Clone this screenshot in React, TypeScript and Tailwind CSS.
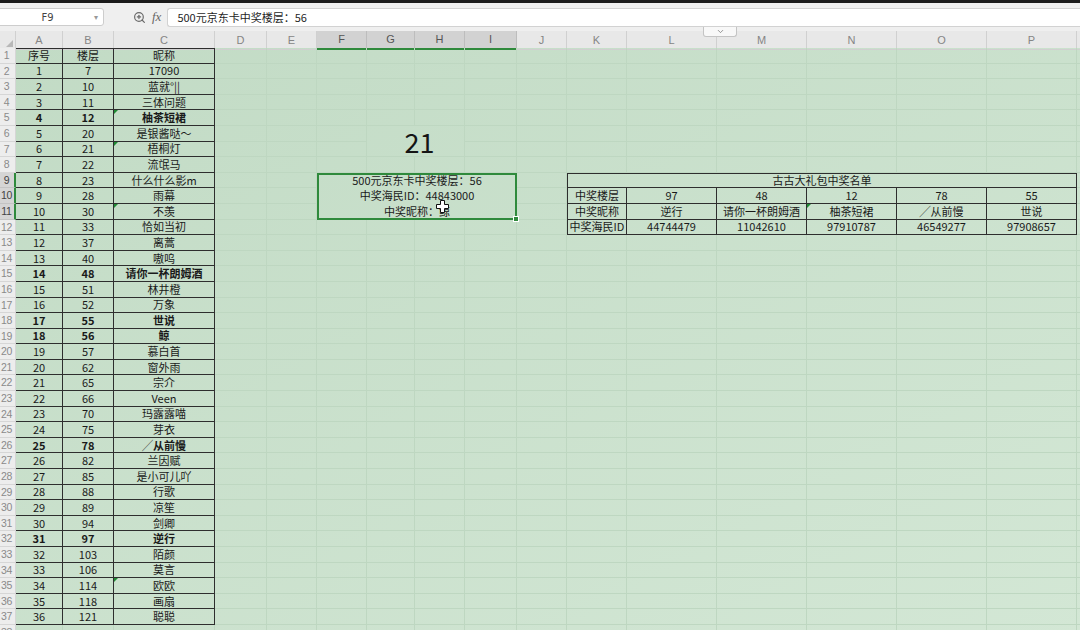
import type { ReactNode } from 'react';
import { ZoomIn, ChevronDown } from 'lucide-react';

const COLS = ['A', 'B', 'C', 'D', 'E', 'F', 'G', 'H', 'I', 'J', 'K', 'L', 'M', 'N', 'O', 'P'];
const SEL_COLS = ['F', 'G', 'H', 'I'];
const SEL_ROWS = [9, 10, 11];
const ROW_COUNT = 38;

// 楼层, 昵称, 是否中奖
const ENTRIES: [number, string, boolean][] = [
  [7, '17090', false],
  [10, '蓝就°||', false],
  [11, '三体问题', false],
  [12, '柚茶短裙', true],
  [20, '是银酱哒～', false],
  [21, '梧桐灯', false],
  [22, '流氓马', false],
  [23, '什么什么影m', false],
  [28, '雨幕', false],
  [30, '不羡', false],
  [33, '恰如当初', false],
  [37, '离蒿', false],
  [40, '嗷呜', false],
  [48, '请你一杯朗姆酒', true],
  [51, '林井橙', false],
  [52, '万象', false],
  [55, '世说', true],
  [56, '鲸', true],
  [57, '慕白首', false],
  [62, '窗外雨', false],
  [65, '宗介', false],
  [66, 'Veen', false],
  [70, '玛露露喵', false],
  [75, '芽衣', false],
  [78, '╱从前慢', true],
  [82, '兰因赋', false],
  [85, '是小可儿吖', false],
  [88, '行歌', false],
  [89, '凉笙', false],
  [94, '剑卿', false],
  [97, '逆行', true],
  [103, '陌颜', false],
  [106, '莫言', false],
  [114, '欧欧', false],
  [118, '画扇', false],
  [121, '聪聪', false],
];

const WINNERS = [
  { floor: '97', nick: '逆行', id: '44744479' },
  { floor: '48', nick: '请你一杯朗姆酒', id: '11042610' },
  { floor: '12', nick: '柚茶短裙', id: '97910787' },
  { floor: '78', nick: '╱从前慢', id: '46549277' },
  { floor: '55', nick: '世说', id: '97908657' },
];

const WIN_LABELS: Record<number, string> = { 10: '中奖楼层', 11: '中奖昵称', 12: '中奖海民ID' };

// cells with the little green error marker
const FLAGGED = new Set(['5C', '7C', '11C', '35C', '11N']);

const plain = 'border-r border-b border-[#bed7c1]';
const boxed = 'flex items-center justify-center border-r border-b border-[#2e2e2e] whitespace-nowrap';

function Flag() {
  return (
    <span className="absolute left-0 top-0 h-0 w-0 border-r-[4px] border-t-[4px] border-r-transparent border-t-[#1f8a34]" />
  );
}

function RowHead({ n }: { n: number }) {
  const sel = SEL_ROWS.includes(n);
  return (
    <div
      className={
        sel
          ? 'relative border-b border-r-2 border-b-[#c4c4c4] border-r-[#2f8a3c] bg-[#d5d5d5] text-[#444]'
          : 'relative border-b border-r border-[#d6d6d6] bg-[#ededed] text-[#8a8a8a]'
      }
    >
      <span className="absolute left-[-2px] top-0 w-[17px] text-center font-['Liberation_Sans',sans-serif] text-[10.5px] leading-[15px] tracking-[-0.3px]">
        {n}
      </span>
    </div>
  );
}

function SelectedBox() {
  return (
    <div className="relative col-span-4 row-span-3 flex flex-col justify-center border-2 border-[#2f8a3c] text-center text-[11px] leading-[15.6px] text-[#1a1a1a]">
      <div>500元京东卡中奖楼层：56</div>
      <div>中奖海民ID：44843000</div>
      <div>中奖昵称：鲸</div>
      {/* fat cross pointer */}
      <svg className="absolute left-[117px] top-[25px]" width="13" height="13" viewBox="0 0 13 13">
        <path d="M4.5 0.5h4v4h4v4h-4v4h-4v-4h-4v-4h4z" fill="#fff" stroke="#111" strokeWidth="1" />
      </svg>
      <span className="absolute -bottom-[4px] -right-[4px] h-[6px] w-[6px] border border-white bg-[#2f8a3c]" />
    </div>
  );
}

function cellAt(r: number, col: string): ReactNode | undefined {
  const key = `${r}${col}`;

  // covered by merged areas
  if (r >= 10 && r <= 11 && SEL_COLS.includes(col)) return undefined;
  if (r === 9 && ['G', 'H', 'I'].includes(col)) return undefined;
  if (r === 9 && ['L', 'M', 'N', 'O', 'P'].includes(col)) return undefined;
  if (r === 6 && col === 'H') return undefined;
  if (r === 7 && (col === 'G' || col === 'H')) return undefined;

  // left table
  if (r <= 37 && (col === 'A' || col === 'B' || col === 'C')) {
    let text: string;
    let bold = false;
    if (r === 1) {
      text = col === 'A' ? '序号' : col === 'B' ? '楼层' : '昵称';
    } else {
      const [floor, nick, win] = ENTRIES[r - 2];
      text = col === 'A' ? String(r - 1) : col === 'B' ? String(floor) : nick;
      bold = win;
    }
    return (
      <div
        key={key}
        className={`relative ${boxed} ${r === 1 ? 'border-t' : ''} ${bold ? 'font-bold' : ''}`}
      >
        {FLAGGED.has(key) && <Flag />}
        {text}
      </div>
    );
  }

  if (r === 6 && col === 'G') {
    return (
      <div
        key={key}
        className="col-span-2 row-span-2 flex items-center justify-center border-b border-r border-[#bed7c1] pl-[8px] text-[27px] leading-none text-[#151515]"
      >
        21
      </div>
    );
  }

  if (r === 9 && col === 'F') return <SelectedBox key={key} />;

  // winners table
  if (r === 9 && col === 'K') {
    return (
      <div key={key} className={`col-span-6 border-l border-t ${boxed}`}>
        古古大礼包中奖名单
      </div>
    );
  }
  if (r >= 10 && r <= 12 && col === 'K') {
    return (
      <div key={key} className={`border-l ${boxed}`}>
        {WIN_LABELS[r]}
      </div>
    );
  }
  if (r >= 10 && r <= 12 && ['L', 'M', 'N', 'O', 'P'].includes(col)) {
    const w = WINNERS[COLS.indexOf(col) - COLS.indexOf('L')];
    const text = r === 10 ? w.floor : r === 11 ? w.nick : w.id;
    return (
      <div key={key} className={`relative ${boxed}`}>
        {FLAGGED.has(key) && <Flag />}
        {text}
      </div>
    );
  }

  return <div key={key} className={plain} />;
}

function ColumnHeader() {
  return (
    <div className="grid h-[17px] grid-cols-[16px_47px_51px_101px_52px_50px_50px_48px_50px_52px_50px_60px_90px_90px_90px_90px_90px_1fr] bg-[#e8e8e8] font-['Liberation_Sans',sans-serif] text-[11px] text-[#858585]">
      <div className="relative border-b border-r border-[#d0d0d0]">
        <span className="absolute bottom-[2px] right-[2px] h-0 w-0 border-b-[7px] border-l-[7px] border-b-[#b8b8b8] border-l-transparent" />
      </div>
      {COLS.map((c) =>
        SEL_COLS.includes(c) ? (
          <div
            key={c}
            className="flex items-center justify-center border-b-2 border-r border-b-[#2f8a3c] border-r-[#bdbdbd] bg-[#d2d2d2] text-[#555]"
          >
            {c}
          </div>
        ) : (
          <div key={c} className="flex items-center justify-center border-b border-r border-[#d0d0d0]">
            {c}
          </div>
        ),
      )}
      <div className="border-b border-[#d0d0d0]" />
    </div>
  );
}

function FormulaBar() {
  return (
    <div className="flex h-[28px] items-center bg-[#efefef]">
      <div className="ml-[-3px] flex h-[18px] w-[107px] items-center rounded-[3px] border border-[#cdcdcd] bg-white">
        <span className="flex-1 pl-[3px] text-center font-['DejaVu_Sans',sans-serif] text-[10px] text-[#444]">F9</span>
        <span className="mr-[5px] text-[8px] leading-none text-[#999]">▾</span>
      </div>
      <ZoomIn className="ml-[29px] text-[#6a6a6a]" size={13} strokeWidth={2.2} />
      <span className="ml-[6px] font-['Liberation_Serif',serif] text-[13px] italic text-[#666]">fx</span>
      <div className="ml-[6px] flex h-[19px] flex-1 items-center rounded-l-[3px] border border-r-0 border-[#d2d2d2] bg-white pl-[9px] text-[11px] text-[#1f1f1f]">
        500元京东卡中奖楼层：56
      </div>
    </div>
  );
}

export default function App() {
  const rows: ReactNode[] = [];
  for (let r = 1; r <= ROW_COUNT; r++) {
    rows.push(<RowHead key={`h${r}`} n={r} />);
    for (const col of COLS) {
      const cell = cellAt(r, col);
      if (cell) rows.push(cell);
    }
    rows.push(<div key={`z${r}`} className="border-b border-[#bed7c1]" />);
  }

  return (
    <div className="relative h-[630px] w-[1080px] overflow-hidden bg-[#c6dec9] font-['Noto_Sans_CJK_SC',sans-serif]">
      <div className="h-[3px] bg-[#1b1b1b]" />
      <FormulaBar />
      <ColumnHeader />
      {/* collapse tab under the formula bar */}
      <div className="absolute left-[703px] top-[27px] flex h-[10px] w-[34px] items-center justify-center rounded-b-[3px] border border-t-0 border-[#c4c4c4] bg-[#f8f8f8]">
        <ChevronDown size={9} className="text-[#777]" strokeWidth={2} />
      </div>
      <div className="grid auto-rows-[15.6px] grid-cols-[16px_47px_51px_101px_52px_50px_50px_48px_50px_52px_50px_60px_90px_90px_90px_90px_90px_1fr] bg-gradient-to-br from-[#c2dbc5] to-[#d3e7d5] text-[11px] leading-none text-[#1a1a1a]">
        {rows}
      </div>
    </div>
  );
}
